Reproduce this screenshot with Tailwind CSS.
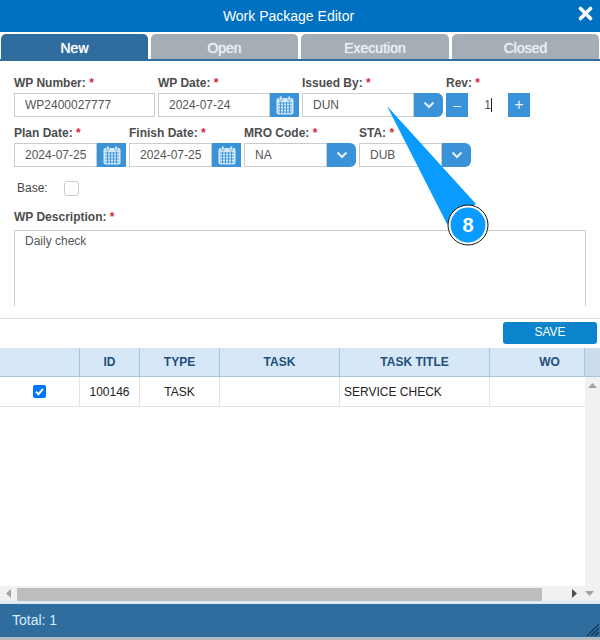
<!DOCTYPE html>
<html lang="en">
<head>
    <meta charset="UTF-8">
    <meta name="viewport" content="width=device-width, initial-scale=1.0">
    <title>Work Package Editor</title>
    <script src="https://cdn.jsdelivr.net/npm/@tailwindcss/browser@4"></script>
</head>
<body class="bg-white">
<div class="relative w-[600px] h-[640px] overflow-hidden flex flex-col bg-white font-['Liberation_Sans',Arial,sans-serif] text-[12px] text-[#555]">

    <!-- Header -->
    <div class="relative h-[32px] shrink-0 bg-[#0070c0] flex items-center justify-center pr-[23px] text-[14px] text-white">
        Work Package Editor
        <svg class="absolute left-[578px] top-[6px]" width="15" height="15" viewBox="0 0 15 15"><path d="M2.5 2.5 L12.5 12.5 M12.5 2.5 L2.5 12.5" stroke="#fff" stroke-width="3.6" stroke-linecap="round"/></svg>
    </div>

    <!-- Tabs -->
    <div class="mt-[2px] h-[27px] shrink-0 flex gap-[3px] px-[1px] border-b-2 border-[#2e6d9e] text-[14px] text-[#e9edf0] [text-shadow:0_0_1px_#ffffff]">
        <div class="w-[147px] h-[27px] pt-[1px] rounded-t-[5px] bg-[#2e6d9e] text-white flex items-center justify-center">New</div>
        <div class="w-[147px] h-[25px] pt-[3px] rounded-t-[5px] bg-[#a5aeb5] flex items-center justify-center">Open</div>
        <div class="w-[148px] h-[25px] pt-[3px] rounded-t-[5px] bg-[#a5aeb5] flex items-center justify-center">Execution</div>
        <div class="w-[147px] h-[25px] pt-[3px] rounded-t-[5px] bg-[#a5aeb5] flex items-center justify-center">Closed</div>
    </div>

    <!-- Form -->
    <div class="shrink-0 pt-[13px] px-[14px]">
        <div class="flex gap-[3px]">
            <div class="w-[141px]">
                <label class="block h-[18px] mb-[1px] leading-[18px] font-bold text-[#4d4d4d]">WP Number: <span class="text-[#d9263a]">*</span></label>
                <input class="w-full h-[24px] border border-[#ccc] pl-[10px] text-[#555] outline-none" value="WP2400027777">
            </div>
            <div class="w-[141px]">
                <label class="block h-[18px] mb-[1px] leading-[18px] font-bold text-[#4d4d4d]">WP Date: <span class="text-[#d9263a]">*</span></label>
                <div class="flex h-[24px]">
                    <input class="min-w-0 flex-1 border border-[#ccc] pl-[10px] text-[#555] outline-none" value="2024-07-24">
                    <span class="w-[29px] bg-[#3a93d8] flex items-center justify-center">
                        <svg width="18" height="19" viewBox="0 0 18 19"><rect x="0.5" y="2" width="17" height="16.5" rx="2" fill="#d4e9f8"/><rect x="3.5" y="0" width="2.6" height="5" rx="1.3" fill="#d4e9f8" stroke="#3a93d8" stroke-width="0.6"/><rect x="11.9" y="0" width="2.6" height="5" rx="1.3" fill="#d4e9f8" stroke="#3a93d8" stroke-width="0.6"/><path d="M2 7h14M2 10h14M2 13h14M2 16h14M4.500 6v11.500M7.500 6v11.500M10.500 6v11.500M13.500 6v11.500" stroke="#3a93d8" stroke-width="0.9"/></svg>
                    </span>
                </div>
            </div>
            <div class="w-[141px]">
                <label class="block h-[18px] mb-[1px] leading-[18px] font-bold text-[#4d4d4d]">Issued By: <span class="text-[#d9263a]">*</span></label>
                <div class="flex h-[24px]">
                    <input class="min-w-0 flex-1 border border-[#ccc] pl-[10px] text-[#555] outline-none" value="DUN">
                    <span class="w-[29px] bg-[#3a93d8] rounded-r-[6px] flex items-center justify-center">
                        <svg width="12" height="8" viewBox="0 0 12 8"><path d="M1.500 1.500 L6 6 L10.500 1.500" fill="none" stroke="#e8f3fb" stroke-width="2"/></svg>
                    </span>
                </div>
            </div>
            <div class="w-[84px]">
                <label class="block h-[18px] mb-[1px] leading-[18px] font-bold text-[#4d4d4d]">Rev: <span class="text-[#d9263a]">*</span></label>
                <div class="flex h-[24px] bg-[#3a93d8] text-[#d4e9f8] text-[14px]">
                    <span class="w-[22px] flex items-center justify-center">&#8211;</span>
                    <span class="w-[40px] bg-white flex items-center justify-end pr-[16px] text-[12px] text-[#555]">1<span class="w-px h-[14px] bg-[#222]"></span></span>
                    <span class="w-[22px] flex items-center justify-center text-[16px] text-[#e8f3fb]">+</span>
                </div>
            </div>
        </div>

        <div class="flex gap-[3px] mt-[7px]">
            <div class="w-[112px]">
                <label class="block h-[18px] mb-[1px] leading-[18px] font-bold text-[#4d4d4d]">Plan Date: <span class="text-[#d9263a]">*</span></label>
                <div class="flex h-[24px]">
                    <input class="min-w-0 flex-1 border border-[#ccc] pl-[10px] text-[#555] outline-none" value="2024-07-25">
                    <span class="w-[29px] bg-[#3a93d8] flex items-center justify-center">
                        <svg width="18" height="19" viewBox="0 0 18 19"><rect x="0.5" y="2" width="17" height="16.5" rx="2" fill="#d4e9f8"/><rect x="3.5" y="0" width="2.6" height="5" rx="1.3" fill="#d4e9f8" stroke="#3a93d8" stroke-width="0.6"/><rect x="11.9" y="0" width="2.6" height="5" rx="1.3" fill="#d4e9f8" stroke="#3a93d8" stroke-width="0.6"/><path d="M2 7h14M2 10h14M2 13h14M2 16h14M4.500 6v11.500M7.500 6v11.500M10.500 6v11.500M13.500 6v11.500" stroke="#3a93d8" stroke-width="0.9"/></svg>
                    </span>
                </div>
            </div>
            <div class="w-[112px]">
                <label class="block h-[18px] mb-[1px] leading-[18px] font-bold text-[#4d4d4d]">Finish Date: <span class="text-[#d9263a]">*</span></label>
                <div class="flex h-[24px]">
                    <input class="min-w-0 flex-1 border border-[#ccc] pl-[10px] text-[#555] outline-none" value="2024-07-25">
                    <span class="w-[29px] bg-[#3a93d8] flex items-center justify-center">
                        <svg width="18" height="19" viewBox="0 0 18 19"><rect x="0.5" y="2" width="17" height="16.5" rx="2" fill="#d4e9f8"/><rect x="3.5" y="0" width="2.6" height="5" rx="1.3" fill="#d4e9f8" stroke="#3a93d8" stroke-width="0.6"/><rect x="11.9" y="0" width="2.6" height="5" rx="1.3" fill="#d4e9f8" stroke="#3a93d8" stroke-width="0.6"/><path d="M2 7h14M2 10h14M2 13h14M2 16h14M4.500 6v11.500M7.500 6v11.500M10.500 6v11.500M13.500 6v11.500" stroke="#3a93d8" stroke-width="0.9"/></svg>
                    </span>
                </div>
            </div>
            <div class="w-[112px]">
                <label class="block h-[18px] mb-[1px] leading-[18px] font-bold text-[#4d4d4d]">MRO Code: <span class="text-[#d9263a]">*</span></label>
                <div class="flex h-[24px]">
                    <input class="min-w-0 flex-1 border border-[#ccc] pl-[10px] text-[#555] outline-none" value="NA">
                    <span class="w-[29px] bg-[#3a93d8] rounded-r-[6px] flex items-center justify-center">
                        <svg width="12" height="8" viewBox="0 0 12 8"><path d="M1.500 1.500 L6 6 L10.500 1.500" fill="none" stroke="#e8f3fb" stroke-width="2"/></svg>
                    </span>
                </div>
            </div>
            <div class="w-[112px]">
                <label class="block h-[18px] mb-[1px] leading-[18px] font-bold text-[#4d4d4d]">STA: <span class="text-[#d9263a]">*</span></label>
                <div class="flex h-[24px]">
                    <input class="min-w-0 flex-1 border border-[#ccc] pl-[10px] text-[#555] outline-none" value="DUB">
                    <span class="w-[29px] bg-[#3a93d8] rounded-r-[6px] flex items-center justify-center">
                        <svg width="12" height="8" viewBox="0 0 12 8"><path d="M1.500 1.500 L6 6 L10.500 1.500" fill="none" stroke="#e8f3fb" stroke-width="2"/></svg>
                    </span>
                </div>
            </div>
        </div>

        <div class="flex items-center h-[16px] mt-[13px] pl-[3px]">
            <span class="w-[47px] text-[#444]">Base:</span>
            <span class="w-[15px] h-[15px] border border-[#ccc] rounded-[3px]"></span>
        </div>

        <label class="block h-[18px] mt-[12px] mb-[4px] leading-[18px] font-bold text-[#4d4d4d]">WP Description: <span class="text-[#d9263a]">*</span></label>
        <div class="h-[76px] w-[572px] border-x border-t border-[#ccc] pl-[10px] pt-[1px] text-[#555]">Daily check</div>
    </div>

    <!-- Save bar -->
    <div class="shrink-0 mt-[12px] border-t border-[#ddd] pt-[3px] pr-[3px] flex justify-end">
        <button class="w-[94px] h-[22px] pb-[3px] rounded-[3px] bg-[#0a84cc] text-white text-[12px]">SAVE</button>
    </div>

    <!-- Table header -->
    <div class="shrink-0 mt-[4px] h-[29px] bg-[#d6e8f7] border-b border-[#a9c5de] flex text-[12px] font-bold text-[#1f4e79]">
        <div class="w-[80px] border-r border-[#a9c5de]"></div>
        <div class="w-[60px] border-r border-[#a9c5de] flex items-center justify-center">ID</div>
        <div class="w-[80px] border-r border-[#a9c5de] flex items-center justify-center">TYPE</div>
        <div class="w-[120px] border-r border-[#a9c5de] flex items-center justify-center">TASK</div>
        <div class="w-[150px] border-r border-[#a9c5de] flex items-center justify-center">TASK TITLE</div>
        <div class="w-[95px] border-r border-[#a9c5de] flex items-center justify-center pl-[25px]">WO</div>
        <div class="flex-1 bg-[#cbdded]"></div>
    </div>

    <!-- Table body -->
    <div class="flex-1 min-h-0 flex">
        <div class="flex-1">
            <div class="h-[30px] border-b border-[#e4e4e4] flex text-[#222]">
                <div class="w-[80px] border-r border-[#e4e4e4] flex items-center justify-center">
                    <span class="w-[13px] h-[13px] rounded-[2px] bg-[#0075ff] flex items-center justify-center">
                        <svg width="11" height="11" viewBox="0 0 11 11"><path d="M2 5.800 L4.500 8.200 L9 2.800" fill="none" stroke="#fff" stroke-width="2"/></svg>
                    </span>
                </div>
                <div class="w-[60px] border-r border-[#e4e4e4] flex items-center justify-center">100146</div>
                <div class="w-[80px] border-r border-[#e4e4e4] flex items-center justify-center">TASK</div>
                <div class="w-[120px] border-r border-[#e4e4e4]"></div>
                <div class="w-[150px] border-r border-[#e4e4e4] flex items-center pl-[4px]">SERVICE CHECK</div>
                <div class="flex-1"></div>
            </div>
        </div>
        <div class="w-[15px] bg-[#f1f1f1] flex justify-center pt-[6px]">
            <svg width="9" height="5" viewBox="0 0 9 5"><path d="M4.500 0 L9 5 H0 Z" fill="#a3a3a3"/></svg>
        </div>
    </div>

    <!-- Horizontal scrollbar -->
    <div class="shrink-0 h-[15px] bg-[#f1f1f1] flex items-center">
        <div class="w-[17px] flex justify-center">
            <svg width="5" height="9" viewBox="0 0 5 9"><path d="M5 0 L0 4.500 L5 9 Z" fill="#a3a3a3"/></svg>
        </div>
        <div class="w-[525px] h-[13px] bg-[#bdbdbd] mt-[2px]"></div>
        <div class="w-[36px] flex justify-end pr-[1px]">
            <svg width="5" height="9" viewBox="0 0 5 9"><path d="M0 0 L5 4.500 L0 9 Z" fill="#505050"/></svg>
        </div>
        <div class="flex-1 flex justify-center">
            <svg width="9" height="5" viewBox="0 0 9 5"><path d="M0 0 H9 L4.500 5 Z" fill="#a3a3a3"/></svg>
        </div>
    </div>
    <div class="shrink-0 h-[3px] bg-[#dfeaf4]"></div>

    <!-- Footer -->
    <div class="shrink-0 h-[33px] bg-[#2e6d9e] flex items-center pl-[12px] text-[14px] text-[#d6eefc] relative">
        Total: 1
        <svg class="absolute right-[1px] bottom-[1px]" width="12" height="12" viewBox="0 0 12 12"><path d="M0 12 L12 0 M4 12 L12 4 M8 12 L12 8" stroke="#12324a" stroke-width="1.2"/></svg>
    </div>
    <div class="shrink-0 h-[3px] bg-[#b5bcc2]"></div>

    <!-- Callout -->
    <svg class="absolute left-0 top-0 pointer-events-none" width="600" height="640" viewBox="0 0 600 640">
        <polygon points="387,106 476,204 447,224" fill="#0a9bff"/>
        <circle cx="468" cy="225" r="20" fill="#fff" stroke="#111" stroke-width="1"/>
        <circle cx="468" cy="225" r="17.500" fill="#0a9bff"/>
    </svg>
    <div class="absolute left-[448px] top-[205px] w-[40px] h-[40px] flex items-center justify-center text-[20px] font-bold text-white">8</div>
</div>
</body>
</html>
